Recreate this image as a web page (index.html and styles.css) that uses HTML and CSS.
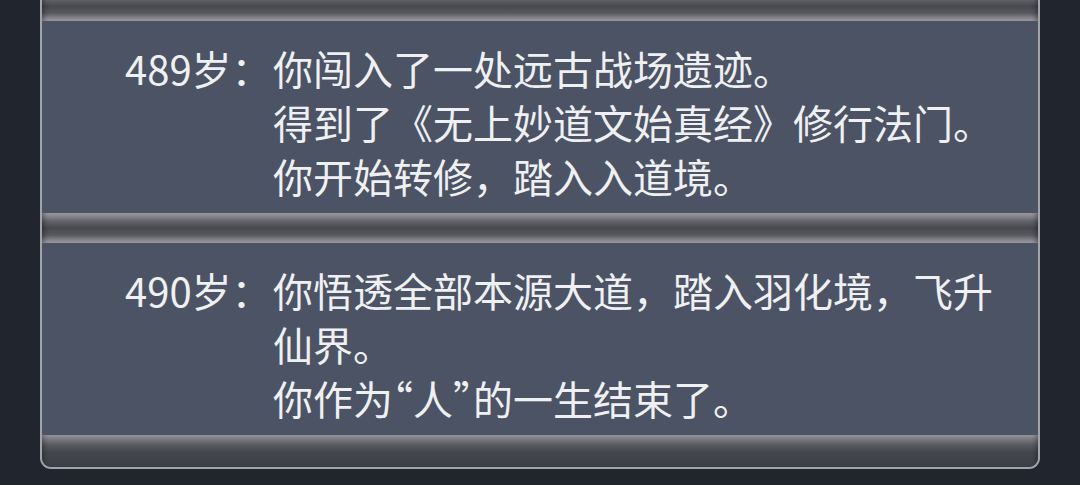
FILE: index.html
```html
<!DOCTYPE html>
<html lang="zh-CN">
<head>
  <meta charset="UTF-8">
  <meta name="viewport" content="width=device-width, initial-scale=1.0">
  <title>人生记录</title>
  <link rel="stylesheet" href="styles.css">
</head>

<body>
  <div class="log">
    <div class="log-bar"></div>

    <div class="log-item">
      <span class="age">489岁：</span>
      <div class="events">
        <p>你闯入了一处远古战场遗迹。</p>
        <p>得到了《无上妙道文始真经》修行法门。</p>
        <p>你开始转修，踏入入道境。</p>
      </div>
    </div>

    <div class="log-bar"></div>

    <div class="log-item">
      <span class="age">490岁：</span>
      <div class="events">
        <p>你悟透全部本源大道，踏入羽化境，飞升仙界。</p>
        <p>你作为<span class="q">“</span>人<span class="q">”</span>的一生结束了。</p>
      </div>
    </div>

    <div class="log-foot"></div>
  </div>
</body>
</html>
```

FILE: styles.css
```css
* {
  box-sizing: border-box;
  padding: 0;
  margin: 0;
}
html, body {
  background-color: #21252d;
  font-family: "Noto Sans CJK SC", "Noto Sans", sans-serif;
}
.log {
  width: 1000px;
  margin: -9px 0 0 40px;
  border: 2px solid #a2a4a8;
  border-top: 0;
  border-radius: 0 0 11px 11px;
  overflow: hidden;
  background-color: #4b5364;
}
/* 记录之间的金属横条 */
.log-bar {
  height: 30px;
  background: linear-gradient(to bottom,
    #a3a5a9 0,
    #8e9095 2px,
    #63656a 8px,
    #47494e 15px,
    #56585d 22px,
    #8c8e93 28px,
    #a3a5a9 30px);
  box-shadow: inset 5px 0 5px -3px rgba(0, 0, 0, 0.35),
              inset -5px 0 5px -3px rgba(0, 0, 0, 0.35);
}
.log-item {
  display: flex;
  padding: 20px 30px 10px 83px;
  color: #eef0f3;
  font-size: 40px;
  line-height: 54px;
}
.age {
  flex: none;
  width: 148px;
  white-space: nowrap;
}
.events {
  flex: 1;
}
/* 引号用半宽 */
.q {
  font-feature-settings: "halt";
}
.log-foot {
  height: 32px;
  background: linear-gradient(to bottom,
    #9c9ea2 0,
    #7f8186 3px,
    #585a5f 10px,
    #44474d 17px,
    #3c3f45 100%);
  box-shadow: inset 5px 0 5px -3px rgba(0, 0, 0, 0.3),
              inset -5px 0 5px -3px rgba(0, 0, 0, 0.3);
}
```
